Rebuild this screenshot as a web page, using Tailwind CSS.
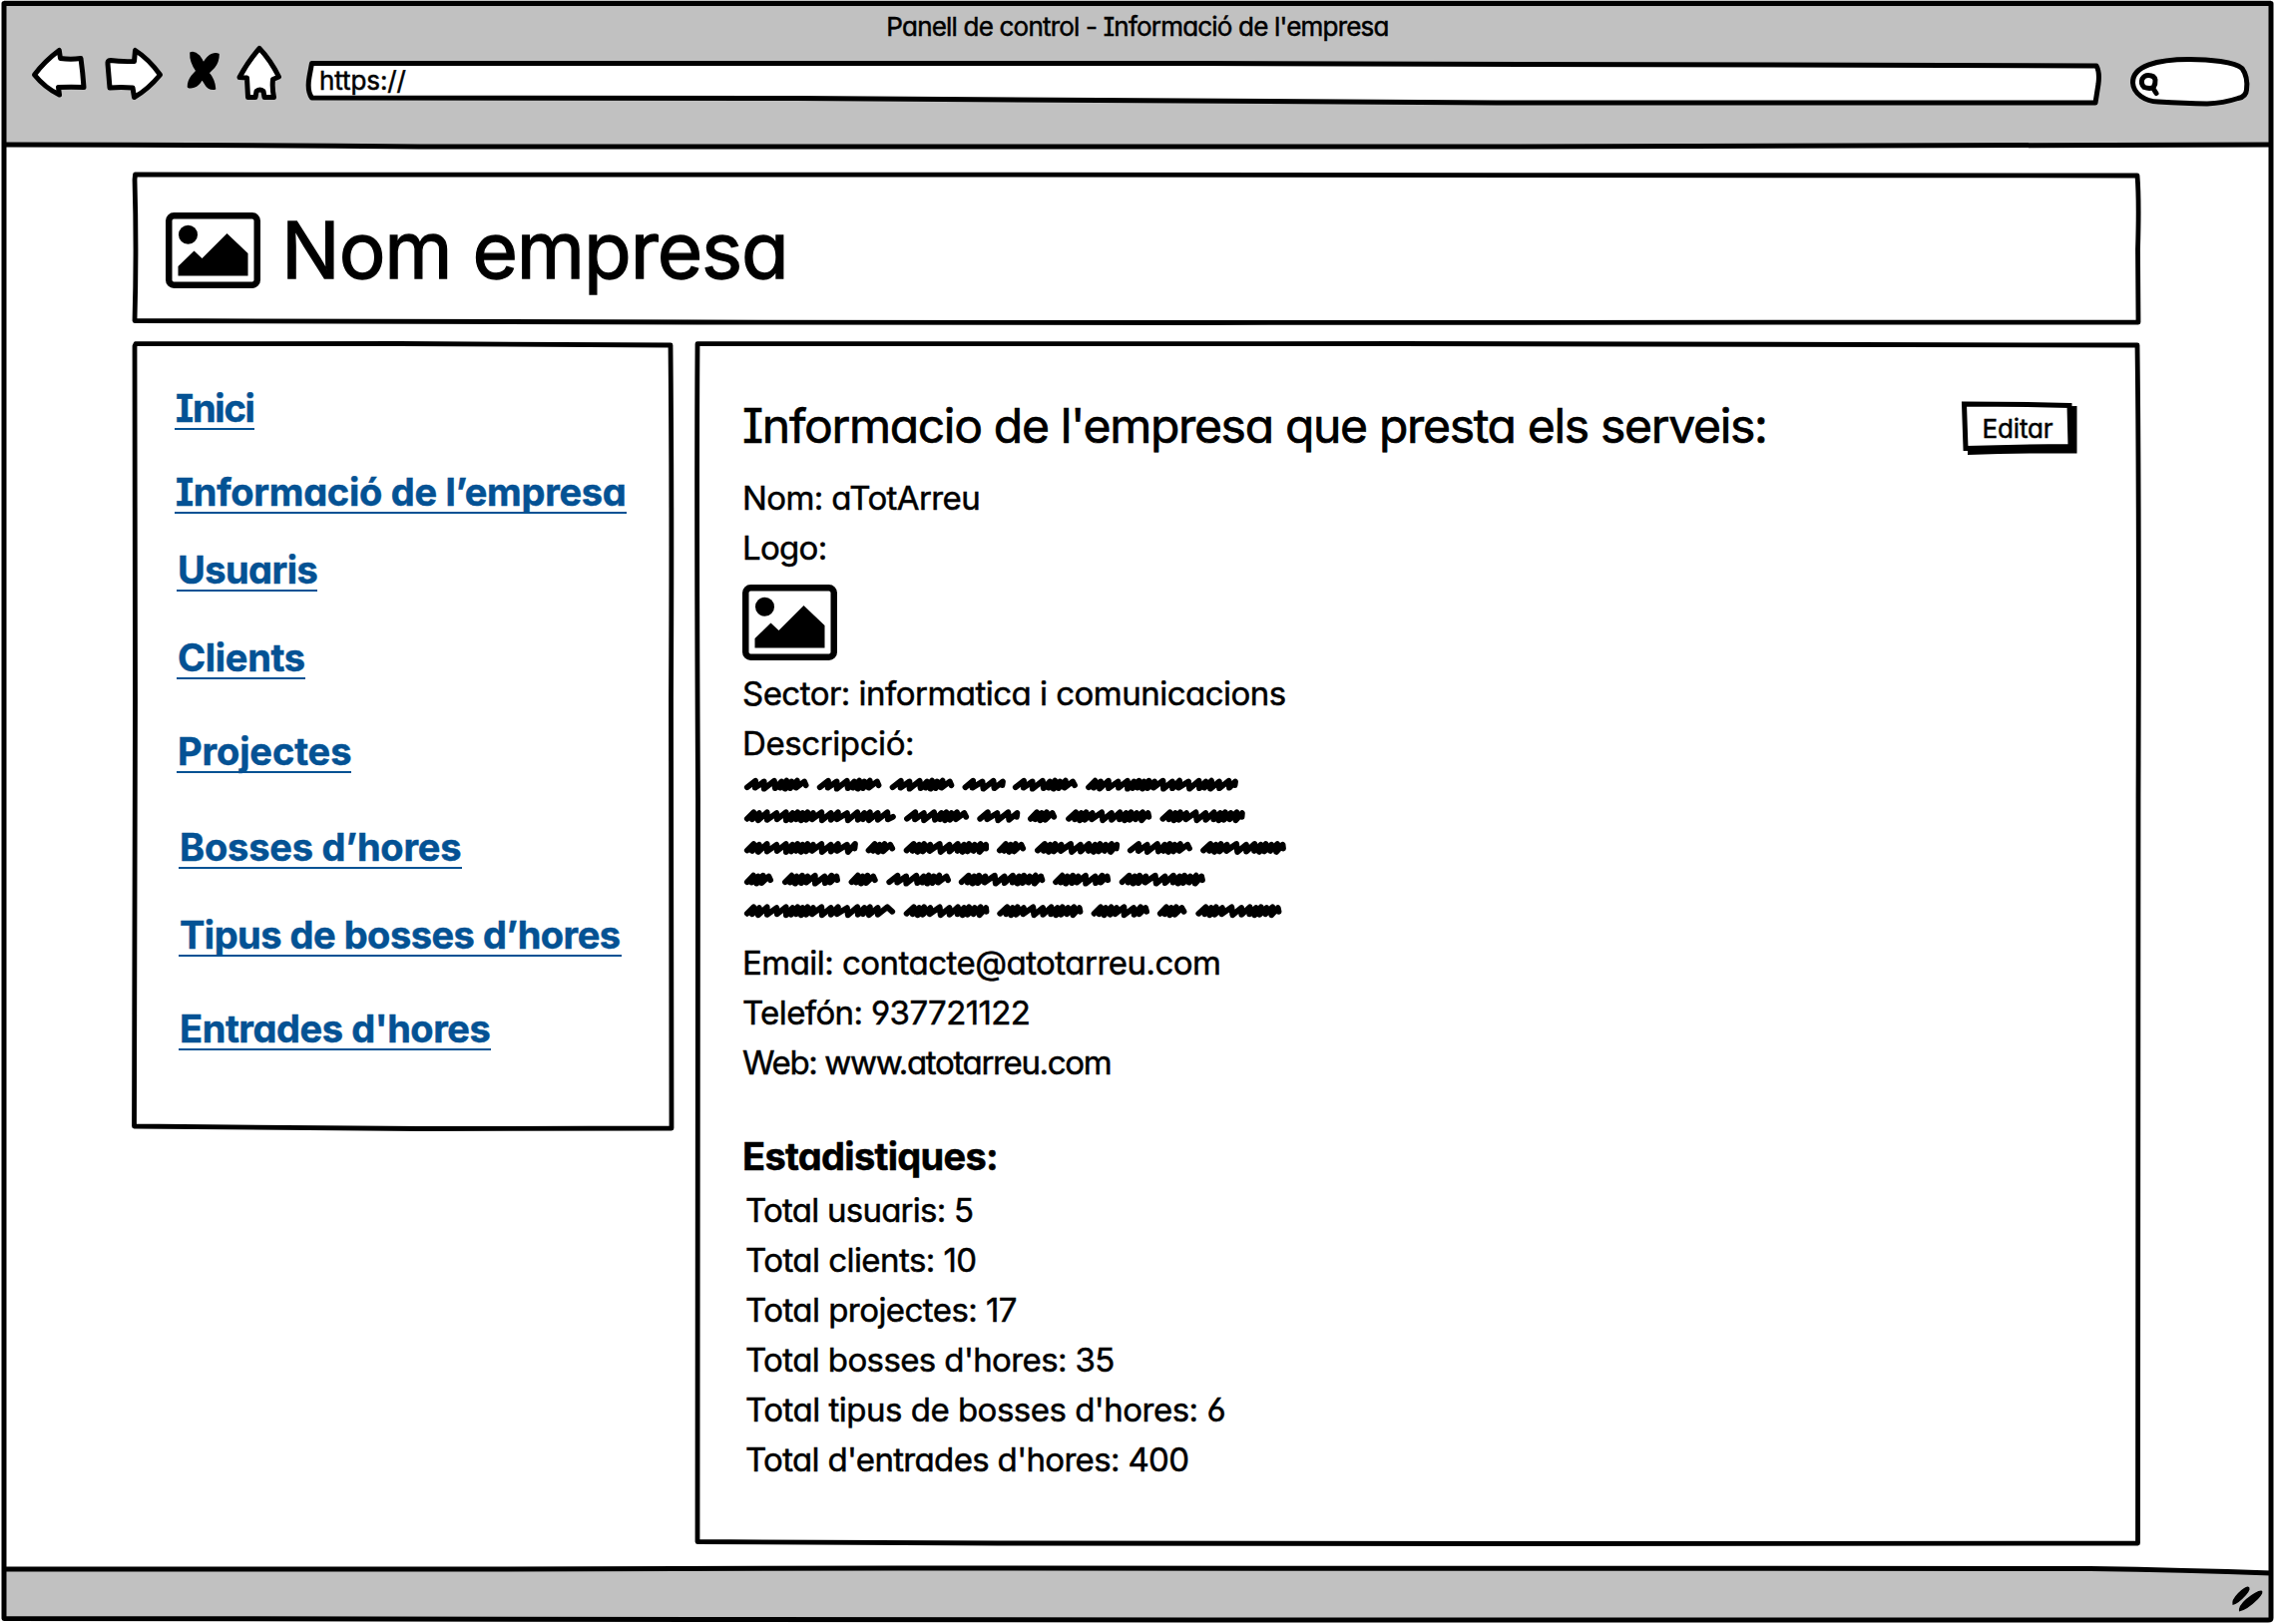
<!DOCTYPE html>
<html lang="ca">
<head>
<meta charset="utf-8">
<title>Panell de control - Informació de l'empresa</title>
<script src="https://cdn.jsdelivr.net/npm/@tailwindcss/browser@4"></script>
</head>
<body class="relative flex flex-col w-[2280px] h-[1628px] overflow-hidden bg-white text-black whitespace-nowrap font-['Inter','Lato',sans-serif] [font-feature-settings:'cv11','cv08','cv04','cv03'] [-webkit-text-stroke:0.5px_currentColor]">

<!-- Browser chrome -->
<header class="h-[146px] mx-1 pt-[7px] bg-[#c1c1c1] shrink-0">
  <h1 class="h-[37px] leading-[40px] text-[26px] text-center tracking-[-0.8px]">Panell de control - Informació de l'empresa</h1>
  <div class="flex h-[62px] pl-[26px]">
    <svg class="w-[60px] h-[62px] shrink-0 mr-3" viewBox="30 44 60 62" fill="#fff" stroke="#000" stroke-width="5" stroke-linejoin="round"><path d="M59.300 50.500L60.500 58.500Q71 60 81 58.500Q83 73 84 87.500Q71 87 58.500 87.500L59.500 95Q45 88 34.500 75Q45 61 59.300 50.500Z"/></svg>
    <svg class="w-[64px] h-[62px] shrink-0 mr-[18px]" viewBox="102 44 64 62" fill="#fff" stroke="#000" stroke-width="5" stroke-linejoin="round"><path d="M135.500 50.500L134.500 61.500Q121 62 110.500 60.500Q107.500 60.500 108 64L110 88Q121 87 133 88L134.500 97.500Q148 90 160.500 75Q149 59 135.500 50.500Z"/></svg>
    <svg class="w-[40px] h-[62px] shrink-0 mr-2.5" viewBox="184 44 40 62" stroke="#000" stroke-width="1.600" stroke-linejoin="round"><path d="M191 53Q195 51.500 199.500 56Q202.500 60 204 63.500Q208 56 212.500 54.500Q216.500 53 219 54.500Q219 62 214.500 67.500L209 73Q215 80 215.500 89Q209 90 206 84.500L202.500 79Q199 85.500 194.500 87Q190.500 88.500 188.500 87Q188.500 81 192.500 76L197 71Q190.500 62 191 53Z"/></svg>
    <svg class="w-[52px] h-[62px] shrink-0 mr-5" viewBox="234 44 52 62" fill="#fff" stroke="#000" stroke-width="5" stroke-linejoin="round"><path d="M260 48.500Q271 60 279.500 77L273.500 79.500Q272.500 88 274.500 97.500L265 97.500L264 91.500Q260.500 88.500 257 91.500L256 97.500L248.500 97.500L247.500 78L240 77.500Q249 61 260 48.500Z"/></svg>
    <div class="relative w-[1802px] shrink-0 mr-[26px]">
      <svg class="absolute inset-0 size-full" viewBox="306 44 1802 62" fill="#fff" stroke="#000" stroke-width="5" stroke-linejoin="round"><path d="M312.500 63.500L1200 63.500Q1600 66 2101 66Q2104.500 72 2103 84L2100 103L1500 103Q1000 100 800 98.500L312.500 98Q307.500 91 310 77Z"/></svg>
      <span class="relative block pl-[14px] pt-[11px] leading-[52px] text-[26px] tracking-[-0.1px]">https://</span>
    </div>
    <svg class="w-[124px] h-[66px] shrink-0" viewBox="2134 44 124 66" fill="#fff" stroke="#000" stroke-width="5" stroke-linejoin="round" stroke-linecap="round"><path d="M2137.500 83C2137 66 2162 59.500 2194 59.500C2214 59.500 2240 62 2247 68.500C2251 74 2252.500 82 2251.500 90Q2251 97 2243 98.500Q2228 103.500 2212 104Q2190 103.500 2163 102C2150 101.500 2138 94 2137.500 83Z"/><path d="M2147 79Q2149 75.500 2153 75.500Q2159 75.500 2160 80Q2160.500 84 2158 88Q2153 89 2149 87.500Q2145 84 2147 79ZM2157.500 88L2161 93.500"/></svg>
  </div>
</header>

<main class="flex-1 pl-[135px] pt-[29px]">
  <!-- Company banner -->
  <section class="relative flex items-center w-[2008px] h-[147px] pl-[31px] pt-1">
    <svg class="absolute inset-0 size-full overflow-visible" viewBox="135 175 2008 147" fill="none" stroke="#000" stroke-width="4.800" stroke-linejoin="round"><path d="M135.500 175L1000 175.200L2142 176Q2144 200 2142.500 250L2143 323L1200 323.500L700 323L135 321.500Q137 250 135 180Z"/></svg>
    <svg class="w-[95px] h-[76px]" viewBox="0 0 95 76"><rect x="3.250" y="3.250" width="88.500" height="69.500" rx="5" fill="#fff" stroke="#000" stroke-width="6.500"/><circle cx="22.500" cy="22.300" r="9.500"/><path d="M12.500 63.500V54L28.500 38.500L36.500 46L61.500 21L82.500 41V63.500Z"/></svg>
    <h2 class="pl-[21px] pt-px leading-[100px] text-[78px] tracking-[-1.1px] [-webkit-text-stroke:1.3px_currentColor]">Nom empresa</h2>
  </section>

  <div class="flex items-start pt-[23px]">
    <!-- Navigation -->
    <nav class="relative w-[538px] h-[785px] mr-[26px] pl-10 pt-11 text-[38px] font-bold text-[#045294] leading-10">
      <svg class="absolute inset-0 size-full overflow-visible pointer-events-none" viewBox="135 345 538 785" fill="none" stroke="#000" stroke-width="4.800" stroke-linejoin="round"><path d="M136 344.700L400 344.500L672 346Q673.500 500 672.500 700L673 1131Q550 1131 420 1131.500Q280 1130.500 134.500 1129Q135.500 900 135.500 700Q134.500 500 135 347Z"/></svg>
      <a class="block w-[80px] h-[42px] pl-px border-b-[2.5px] border-[#045294] tracking-[-1.2px]">Inici</a>
      <a class="block w-[453px] h-[42px] mt-[42px] pl-px border-b-[2.5px] border-[#045294] tracking-[-0.27px]">Informació de l’empresa</a>
      <a class="block w-[141px] h-[42px] mt-[36px] ml-[2px] pl-px border-b-[2.5px] border-[#045294] tracking-[-0.55px]">Usuaris</a>
      <a class="block w-[129px] h-[42px] mt-[46px] ml-[2px] pl-px border-b-[2.5px] border-[#045294] tracking-[-0.3px]">Clients</a>
      <a class="block w-[175px] h-[42px] mt-[52px] ml-[2px] pl-px border-b-[2.5px] border-[#045294] tracking-[-0.1px]">Projectes</a>
      <a class="block w-[284px] h-[42px] mt-[54px] ml-[4px] pl-px border-b-[2.5px] border-[#045294] tracking-[-0.2px]">Bosses d’hores</a>
      <a class="block w-[444px] h-[42px] mt-[46px] ml-[4px] pl-px border-b-[2.5px] border-[#045294] tracking-[-0.5px]">Tipus de bosses d’hores</a>
      <a class="block w-[313px] h-[42px] mt-[52px] ml-[4px] pl-px border-b-[2.5px] border-[#045294] tracking-[-0.43px]">Entrades d'hores</a>
    </nav>

    <!-- Company details -->
    <section class="relative w-[1444px] h-[1201px] pl-[45px] pt-[51px] text-[33px] leading-[50px]">
      <svg class="absolute inset-0 size-full overflow-visible pointer-events-none" viewBox="699 345 1444 1201" fill="none" stroke="#000" stroke-width="4.800" stroke-linejoin="round"><path d="M699 344.700L1400 344.500L2142 346Q2144 500 2143 800L2142.500 1547L1500 1547.500L1000 1547L699 1545.500Q700 1100 699.500 800Q698 500 699 347Z"/></svg>
      <div class="flex justify-between pr-[61px]">
        <h3 class="h-[78px] pt-px leading-[60px] text-[48px] tracking-[-1.31px] [-webkit-text-stroke:0.7px_currentColor]">Informacio de l'empresa que presta els serveis:</h3>
        <button class="relative w-[116px] h-[54px] mt-[6px] text-[26px] tracking-[-0.15px]">
          <svg class="absolute inset-0 size-full overflow-visible" viewBox="1966 402 116 54"><path d="M1972 409L2081.500 407V454.500Q2030 454 1972 456Z"/><path d="M1968.500 405Q2020 405 2074 406.500L2075 447.500Q2020 448 1970 449.500Z" fill="#fff" stroke="#000" stroke-width="5"/></svg>
          <span class="relative block pr-1 leading-[49px]">Editar</span>
        </button>
      </div>
      <p class="tracking-[-0.6px]">Nom: aTotArreu</p>
      <p class="tracking-[-0.7px]">Logo:</p>
      <svg class="w-[95px] h-[76px] mt-[12px] mb-[8px]" viewBox="0 0 95 76"><rect x="3.250" y="3.250" width="88.500" height="69.500" rx="5" fill="#fff" stroke="#000" stroke-width="6.500"/><circle cx="22.500" cy="22.300" r="9.500"/><path d="M12.500 63.500V54L28.500 38.500L36.500 46L61.500 21L82.500 41V63.500Z"/></svg>
      <p class="tracking-[-0.52px]">Sector: informatica i comunicacions</p>
      <p class="tracking-[-0.4px]">Descripció:</p>
      <svg id="scribble" class="w-[560px] h-[160px] mb-[10px]" viewBox="744 770 560 160" fill="none" stroke="#000" stroke-width="5.800" stroke-linecap="round" stroke-linejoin="round"></svg>
      <p class="tracking-[-0.53px]">Email: contacte@atotarreu.com</p>
      <p class="tracking-[-0.61px]">Telefón: 937721122</p>
      <p class="tracking-[-1.35px]">Web: www.atotarreu.com</p>
      <h4 class="mt-[44px] mb-[4px] text-[38px] font-bold tracking-[-0.7px]">Estadistiques:</h4>
      <div class="pl-[3px]">
        <p class="tracking-[-0.75px]">Total usuaris: 5</p>
        <p class="tracking-[-0.55px]">Total clients: 10</p>
        <p class="tracking-[-0.55px]">Total projectes: 17</p>
        <p class="tracking-[-0.61px]">Total bosses d'hores: 35</p>
        <p class="tracking-[-0.5px]">Total tipus de bosses d'hores: 6</p>
        <p class="tracking-[-0.66px]">Total d'entrades d'hores: 400</p>
      </div>
    </section>
  </div>
</main>

<!-- Status bar and window outline -->
<svg class="absolute inset-0 size-full pointer-events-none" viewBox="0 0 2280 1628" fill="none" stroke="#000" stroke-width="5" stroke-linejoin="round">
  <path d="M4 1573L700 1572.500L2095 1572.500L2276 1577V1624H4Z" fill="#c1c1c1" stroke="none"/>
  <path d="M4 3.500H2276V1622Q2276 1624 2273 1624L1200 1624L700 1623.500L4 1622.500V3.500Z"/>
  <path d="M4 145Q200 145 420 147L1500 147L2276 145"/>
  <path d="M4 1573L500 1573L900 1572L2095 1572.500Q2190 1574 2276 1577"/>
  <path d="M2237.500 1609Q2236 1604 2243 1597Q2250 1590 2253 1590.500Q2257 1592 2251 1599Q2243 1608 2237.500 1609ZM2244 1615.500Q2243 1610 2251 1603Q2262 1594 2266.500 1594.500Q2269.500 1596 2263 1603Q2252 1614 2244 1615.500Z" fill="#000" stroke="none"/>
</svg>

<script>
  // Scribbled lines: centre y, then [start, end] of each word, 2.703 units to a pixel from x = 730
  const lines = [
    [786.7, [[43,218],[240,415],[437,612],[634,750],[770,946],[968,1380]]],
    [818.3, [[43,454],[476,652],[674,789],[811,890],[914,1147],[1169,1399]]],
    [850, [[43,350],[372,452],[475,706],[727,806],[830,1059],[1081,1257],[1279,1511]]],
    [881.7, [[43,122],[146,303],[326,405],[428,603],[624,858],[879,1036],[1059,1292]]],
    [913.3, [[43,452],[475,707],[728,961],[983,1141],[1162,1242],[1266,1499]]],
  ];
  // Stroke spacing for each word length: short words are dense, longer ones alternate
  const patterns = {
    tiny: [4.5, 5, 5, 6], small: [7, 11, 11, 10], four: [8, 9, 11, 5, 5, 5, 6],
    five: [5, 5, 6, 5, 9, 10], long: [6, 5, 5, 7, 11, 9, 8, 5, 5, 6], huge: [5, 6, 9, 10, 9, 5, 5, 5, 5, 6, 10, 9, 6, 11, 10],
  };
  let d = '';
  for (const [y, words] of lines) for (const [a, b] of words) {
    const x0 = 730 + a / 2.703 + 2.9, x1 = 730 + b / 2.703 - 2.5, w = b - a;
    const p = w < 90 ? patterns.tiny : w < 130 ? patterns.small : w < 165 ? patterns.five : w < 190 ? patterns.four : w < 300 ? patterns.long : patterns.huge;
    let x = x0, i = 0;
    d += `M${x} ${y + 2.5}`;
    while (x < x1 - 6) {
      const s = p[i % p.length], lift = i % 2;
      const top = Math.min(x + s * 0.6 + 3.5, x1);
      d += `L${top} ${y - 4 + lift * 0.8}`;
      x += s;
      if (x < x1 - 5) d += `L${x} ${y + 3 + ((i * 2) % 3) * 0.5}`;
      i++;
    }
    d += `L${x1 - 0.5} ${y + 0.5}`;
  }
  const path = document.createElementNS('http://www.w3.org/2000/svg', 'path');
  path.setAttribute('d', d);
  document.getElementById('scribble').append(path);
</script>
</body>
</html>
